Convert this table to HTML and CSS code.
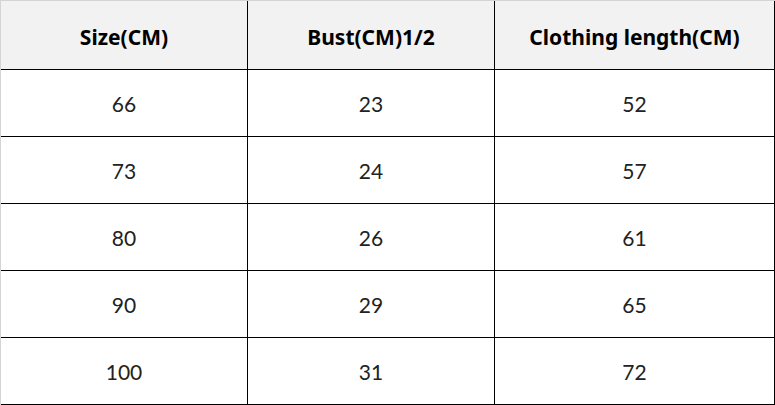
FILE: index.html
```html
<!DOCTYPE html>
<html>
<head>
<meta charset="utf-8">
<link rel="stylesheet" href="styles.css">
</head>
<body>
<div class="size-table">
  <div class="cell head">Size(CM)</div>
  <div class="cell head">Bust(CM)1/2</div>
  <div class="cell head">Clothing length(CM)</div>
  <div class="cell">66</div><div class="cell">23</div><div class="cell">52</div>
  <div class="cell">73</div><div class="cell">24</div><div class="cell">57</div>
  <div class="cell">80</div><div class="cell">26</div><div class="cell">61</div>
  <div class="cell">90</div><div class="cell">29</div><div class="cell">65</div>
  <div class="cell">100</div><div class="cell">31</div><div class="cell">72</div>
</div>
</body>
</html>
```
FILE: styles.css
```css
html, body {
  margin: 0;
  padding: 0;
  background: #ffffff;
}
.size-table {
  display: grid;
  grid-template-columns: 246px 246px 279px;
  grid-template-rows: 68px repeat(5, 66px);
  gap: 1px;
  background: #000000;
  padding: 0 1px 1px 0;
  border-top: 1px solid #d4d4d4;
  border-left: 1px solid #d4d4d4;
  box-sizing: border-box;
  width: 775px;
}
.cell {
  background: #ffffff;
  display: flex;
  align-items: center;
  justify-content: center;
  font-family: Lato, "Liberation Sans", sans-serif;
  font-size: 21px;
  color: #222222;
}
.cell.head {
  background: #f2f2f2;
  font-family: "Noto Sans", "Open Sans", sans-serif;
  font-weight: bold;
  font-size: 21px;
  color: #000000;
  padding-top: 4px;
  box-sizing: border-box;
}
```
